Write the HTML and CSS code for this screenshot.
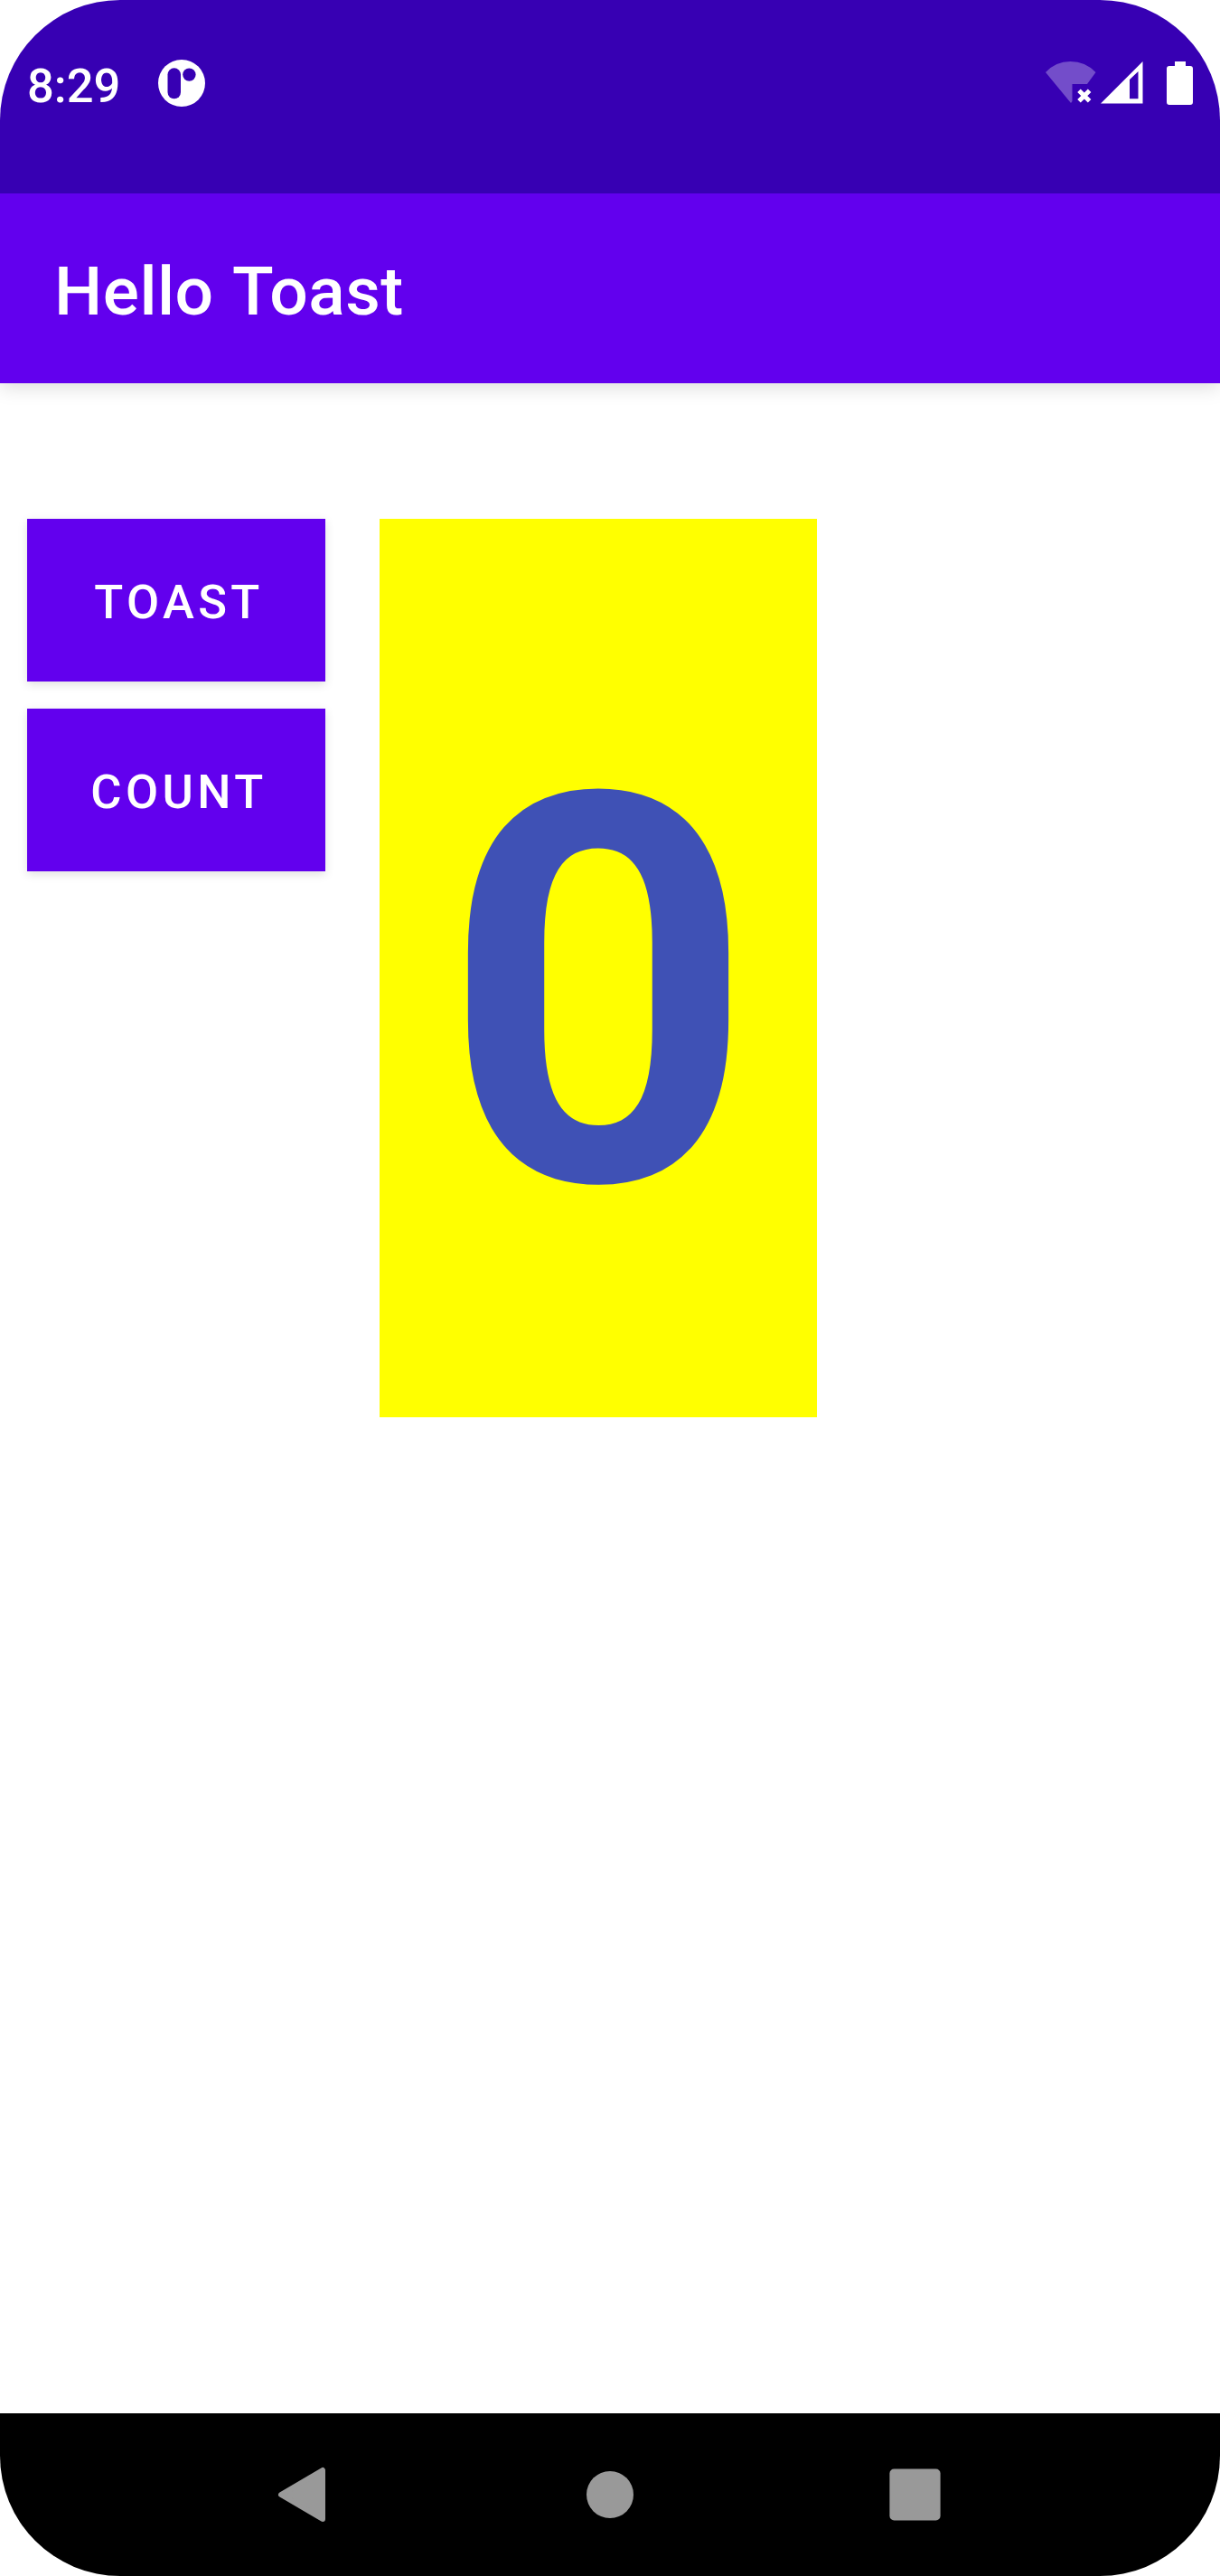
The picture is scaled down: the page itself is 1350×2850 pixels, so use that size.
FILE: index.html
```html
<!DOCTYPE html>
<html lang="en">
<head>
<meta charset="utf-8">
<title>Hello Toast</title>
<link rel="stylesheet" href="styles.css">
</head>
<body>
<div class="screen">
  <header class="status">
    <span class="clock">8:29</span>
    <svg class="notice" viewBox="0 0 52 52" width="52" height="52"><circle cx="26" cy="26" r="26" fill="#fff"/><rect x="10.5" y="9.3" width="14.5" height="34" rx="7.2" fill="#3700b3"/><circle cx="34.4" cy="16.600" r="7.2" fill="#3700b3"/></svg>
    <svg class="system" viewBox="0 0 164 50" width="164" height="50">
      <path d="M1 13Q12 1 28.500 1T56.500 13L47 26H30.500V45L29 47Z" fill="#fff" fill-opacity=".3"/>
      <path d="M38 33.200L49.600 44.800M49.600 33.200L38 44.800" stroke="#fff" stroke-width="5"/>
      <path fill-rule="evenodd" d="M62 47.500L108.500 1V47.500ZM94 21V42.300H103.500V12Z" fill="#fff"/>
      <path d="M144 1H156V6H161Q164 6 164 9V46Q164 49 161 49H138Q135 49 135 46V9Q135 6 138 6H144Z" fill="#fff"/>
    </svg>
  </header>
  <div class="appbar"><h1 class="title">Hello Toast</h1></div>
  <main class="content">
    <div class="actions">
      <button class="btn">TOAST</button>
      <button class="btn">COUNT</button>
    </div>
    <div class="count">0</div>
  </main>
  <nav class="nav">
    <svg viewBox="0 0 64 64" width="64" height="64"><path d="M9 32L55 5V59Z" fill="#999" stroke="#999" stroke-width="6" stroke-linejoin="round"/></svg>
    <svg viewBox="0 0 64 64" width="64" height="64"><circle cx="32" cy="32" r="26" fill="#999"/></svg>
    <svg viewBox="0 0 64 64" width="64" height="64"><rect x=".4" y="3.500" width="56.200" height="57" rx="5" fill="#999"/></svg>
  </nav>
</div>
</body>
</html>
```
FILE: styles.css
```css
body { margin: 0; background: #fff; font-family: Roboto, sans-serif; }
.screen { width: 1350px; height: 2850px; display: flex; flex-direction: column; border-radius: 133px; overflow: hidden; background: #fff; }
.status { position: relative; z-index: 1; height: 214px; box-sizing: border-box; padding: 66px 30px 0 30px; display: flex; align-items: flex-start; background: #3700b3; color: #fff; }
.clock { font-size: 52.5px; line-height: 58px; font-weight: 500; }
.notice { margin-left: 42px; }
.system { margin: 1px 0 0 auto; }
.appbar { height: 210px; box-sizing: border-box; padding: 6px 0 0 60px; display: flex; align-items: center; background: #6200ee; box-shadow: 0 4px 20px rgba(0,0,0,.15); }
.title { margin: 0; font-size: 75px; line-height: 90px; font-weight: 500; letter-spacing: .5px; word-spacing: 3px; color: #fff; }
.content { flex: 1; padding: 150px 30px; display: flex; align-items: flex-start; gap: 60px; }
.actions { display: flex; flex-direction: column; gap: 30px; }
.btn { box-sizing: border-box; width: 330px; height: 180px; padding: 4px 0 0 6px; border: 0; background: #6200ee; color: #fff; font: 500 52.5px Roboto, sans-serif; letter-spacing: 4.4px; box-shadow: 0 3px 10px rgba(0,0,0,.13); }
.count { box-sizing: border-box; width: 484px; height: 994px; padding-top: 57px; display: flex; align-items: center; justify-content: center; background: #ff0; color: #3f51b5; font-size: 600px; line-height: 703px; font-weight: 700; }
.nav { height: 180px; padding: 0 302px; display: flex; align-items: center; justify-content: space-between; background: #000; }
```
